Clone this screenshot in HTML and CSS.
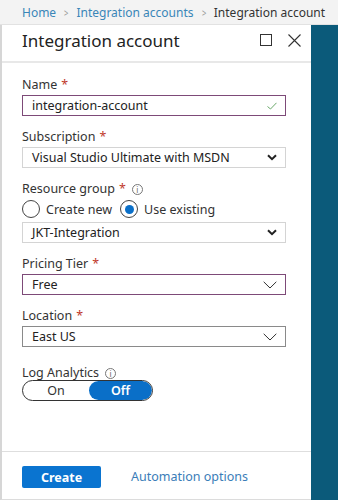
FILE: index.html
```html
<!DOCTYPE html>
<html>
<head>
<meta charset="utf-8">
<link rel="stylesheet" href="styles.css">
</head>
<body>
<nav class="crumbs">
  <a class="crumb-link">Home</a>
  <span class="crumb-sep">&gt;</span>
  <a class="crumb-link">Integration accounts</a>
  <span class="crumb-sep">&gt;</span>
  <span class="crumb-current">Integration account</span>
</nav>
<div class="main">
  <section class="panel">
    <header class="panel-head">
      <h1 class="title">Integration account</h1>
      <div class="head-icons">
        <svg class="icon" width="12" height="12" viewBox="0 0 12 12"><rect x="0.5" y="0.5" width="11" height="11" fill="none" stroke="#333" stroke-width="1"/></svg>
        <svg class="icon" width="13" height="13" viewBox="0 0 13 13"><path d="M0.5 0.5 L12.5 12.5 M12.5 0.5 L0.5 12.5" stroke="#333" stroke-width="1.1" fill="none"/></svg>
      </div>
    </header>
    <div class="form">
      <div class="field">
        <label class="label">Name <span class="req">*</span></label>
        <div class="box box-active">
          <span class="value">integration-account</span>
          <svg width="10" height="8" viewBox="0 0 10 8"><path d="M0.5 4.5 L3.5 7 L9.5 0.8" stroke="#6aa86a" stroke-width="1" fill="none"/></svg>
        </div>
      </div>
      <div class="field">
        <label class="label">Subscription <span class="req">*</span></label>
        <div class="box box-light">
          <span class="value">Visual Studio Ultimate with MSDN</span>
          <svg width="10" height="7" viewBox="0 0 10 7"><path d="M1 1.2 L5 5.2 L9 1.2" stroke="#222" stroke-width="2" fill="none"/></svg>
        </div>
      </div>
      <div class="field">
        <label class="label">Resource group <span class="req">*</span> <span class="info">i</span></label>
        <div class="radios">
          <span class="radio"><span class="dot"></span>Create new</span>
          <span class="radio"><span class="dot dot-on"></span>Use existing</span>
        </div>
        <div class="box box-light box-gap">
          <span class="value">JKT-Integration</span>
          <svg width="10" height="7" viewBox="0 0 10 7"><path d="M1 1.2 L5 5.2 L9 1.2" stroke="#222" stroke-width="2" fill="none"/></svg>
        </div>
      </div>
      <div class="field">
        <label class="label">Pricing Tier <span class="req">*</span></label>
        <div class="box box-active">
          <span class="value">Free</span>
          <svg width="14" height="8" viewBox="0 0 14 8"><path d="M0.7 0.8 L7 7 L13.3 0.8" stroke="#333" stroke-width="1" fill="none"/></svg>
        </div>
      </div>
      <div class="field">
        <label class="label">Location <span class="req">*</span></label>
        <div class="box box-dark">
          <span class="value">East US</span>
          <svg width="14" height="8" viewBox="0 0 14 8"><path d="M0.7 0.8 L7 7 L13.3 0.8" stroke="#333" stroke-width="1" fill="none"/></svg>
        </div>
      </div>
      <div class="field field-log">
        <label class="label label-log">Log Analytics <span class="info">i</span></label>
        <div class="toggle">
          <span class="opt">On</span>
          <span class="opt opt-on">Off</span>
        </div>
      </div>
    </div>
    <footer class="panel-foot">
      <button class="btn">Create</button>
      <a class="link">Automation options</a>
    </footer>
  </section>
  <aside class="rail"></aside>
</div>
</body>
</html>
```

FILE: styles.css
```css
* { box-sizing: border-box; }
html, body { margin: 0; padding: 0; }
body {
  width: 338px;
  height: 500px;
  overflow: hidden;
  font-family: "Noto Sans", "Open Sans", sans-serif;
  color: #333;
  background: #fff;
}
.crumbs {
  height: 25px;
  background: #f3f3f3;
  border-bottom: 1px solid #e2e2e2;
  display: flex;
  align-items: center;
  padding-left: 22px;
  font-size: 12px;
  white-space: nowrap;
}
.crumb-link { color: #3a86b8; }
.crumb-sep { color: #999; margin: 0 7px; font-size: 11px; transform: scaleX(0.7); display: inline-block; }
.crumb-current { color: #333; }
.main {
  display: flex;
  height: 475px;
}
.panel {
  width: 311px;
  border-left: 2px solid #d6d6d6;
  border-bottom: 1px solid #dcdcdc;
  display: flex;
  flex-direction: column;
}
.rail {
  flex: 1;
  background: #0b5a7a;
}
.panel-head {
  height: 38px;
  border-bottom: 2px solid #e8e8e8;
  display: flex;
  align-items: center;
  justify-content: space-between;
  padding: 0 10px 6px 20px;
}
.title {
  margin: 0;
  font-size: 17px;
  font-weight: 400;
  color: #222;
}
.head-icons {
  display: flex;
  align-items: center;
  gap: 16px;
}
.icon { display: block; }
.form {
  flex: 1;
  padding: 13px 25px 0 20px;
  display: flex;
  flex-direction: column;
  gap: 12px;
}
.field { display: flex; flex-direction: column; }
.field-log { margin-top: 5px; }
.label {
  font-size: 12.5px;
  line-height: 18px;
  margin-bottom: 1px;
  color: #333;
  display: flex;
  align-items: center;
  gap: 4px;
}
.label-log { margin-bottom: -2px; }
.req { color: #c0392b; }
.info {
  width: 11px;
  height: 11px;
  border: 1px solid #777;
  border-radius: 50%;
  font-size: 8px;
  line-height: 9px;
  text-align: center;
  color: #666;
  margin-left: 2px;
}
.box {
  height: 21px;
  display: flex;
  align-items: center;
  justify-content: space-between;
  padding: 0 8px 0 9px;
  font-size: 12.5px;
  color: #222;
  border: 1px solid #ccc;
}
.box svg { display: block; }
.box-active { border-color: #7d4a78; }
.box-light { border-color: #d4d4d4; }
.box-dark { border-color: #8a8a8a; }
.box-gap { margin-top: 3px; }
.radios {
  display: flex;
  gap: 8px;
  height: 20px;
  align-items: center;
  font-size: 12.5px;
}
.radio { display: flex; align-items: center; gap: 6px; }
.dot {
  width: 18px;
  height: 18px;
  border: 1px solid #444;
  border-radius: 50%;
  display: flex;
  align-items: center;
  justify-content: center;
}
.dot-on::after {
  content: "";
  width: 9px;
  height: 9px;
  border-radius: 50%;
  background: #0a6fc8;
}
.toggle {
  width: 131px;
  height: 21px;
  border: 1px solid #333;
  border-radius: 11px;
  display: flex;
  font-size: 12.5px;
  overflow: hidden;
}
.opt {
  flex: 1;
  display: flex;
  align-items: center;
  justify-content: center;
}
.opt:first-child { flex: 0 0 66px; }
.opt-on {
  background: #0a6fc8;
  color: #fff;
  font-weight: 600;
  border-radius: 10px;
}
.panel-foot {
  height: 48px;
  border-top: 1px solid #dedede;
  display: flex;
  align-items: flex-start;
  padding: 14px 0 0 20px;
  gap: 30px;
}
.btn {
  width: 79px;
  height: 22px;
  border: none;
  border-radius: 2px;
  background: #0a74d0;
  color: #fff;
  font-family: inherit;
  font-size: 12.5px;
  font-weight: 700;
  padding: 0;
}
.link {
  color: #3a7db8;
  font-size: 12.5px;
  line-height: 22px;
}
```
